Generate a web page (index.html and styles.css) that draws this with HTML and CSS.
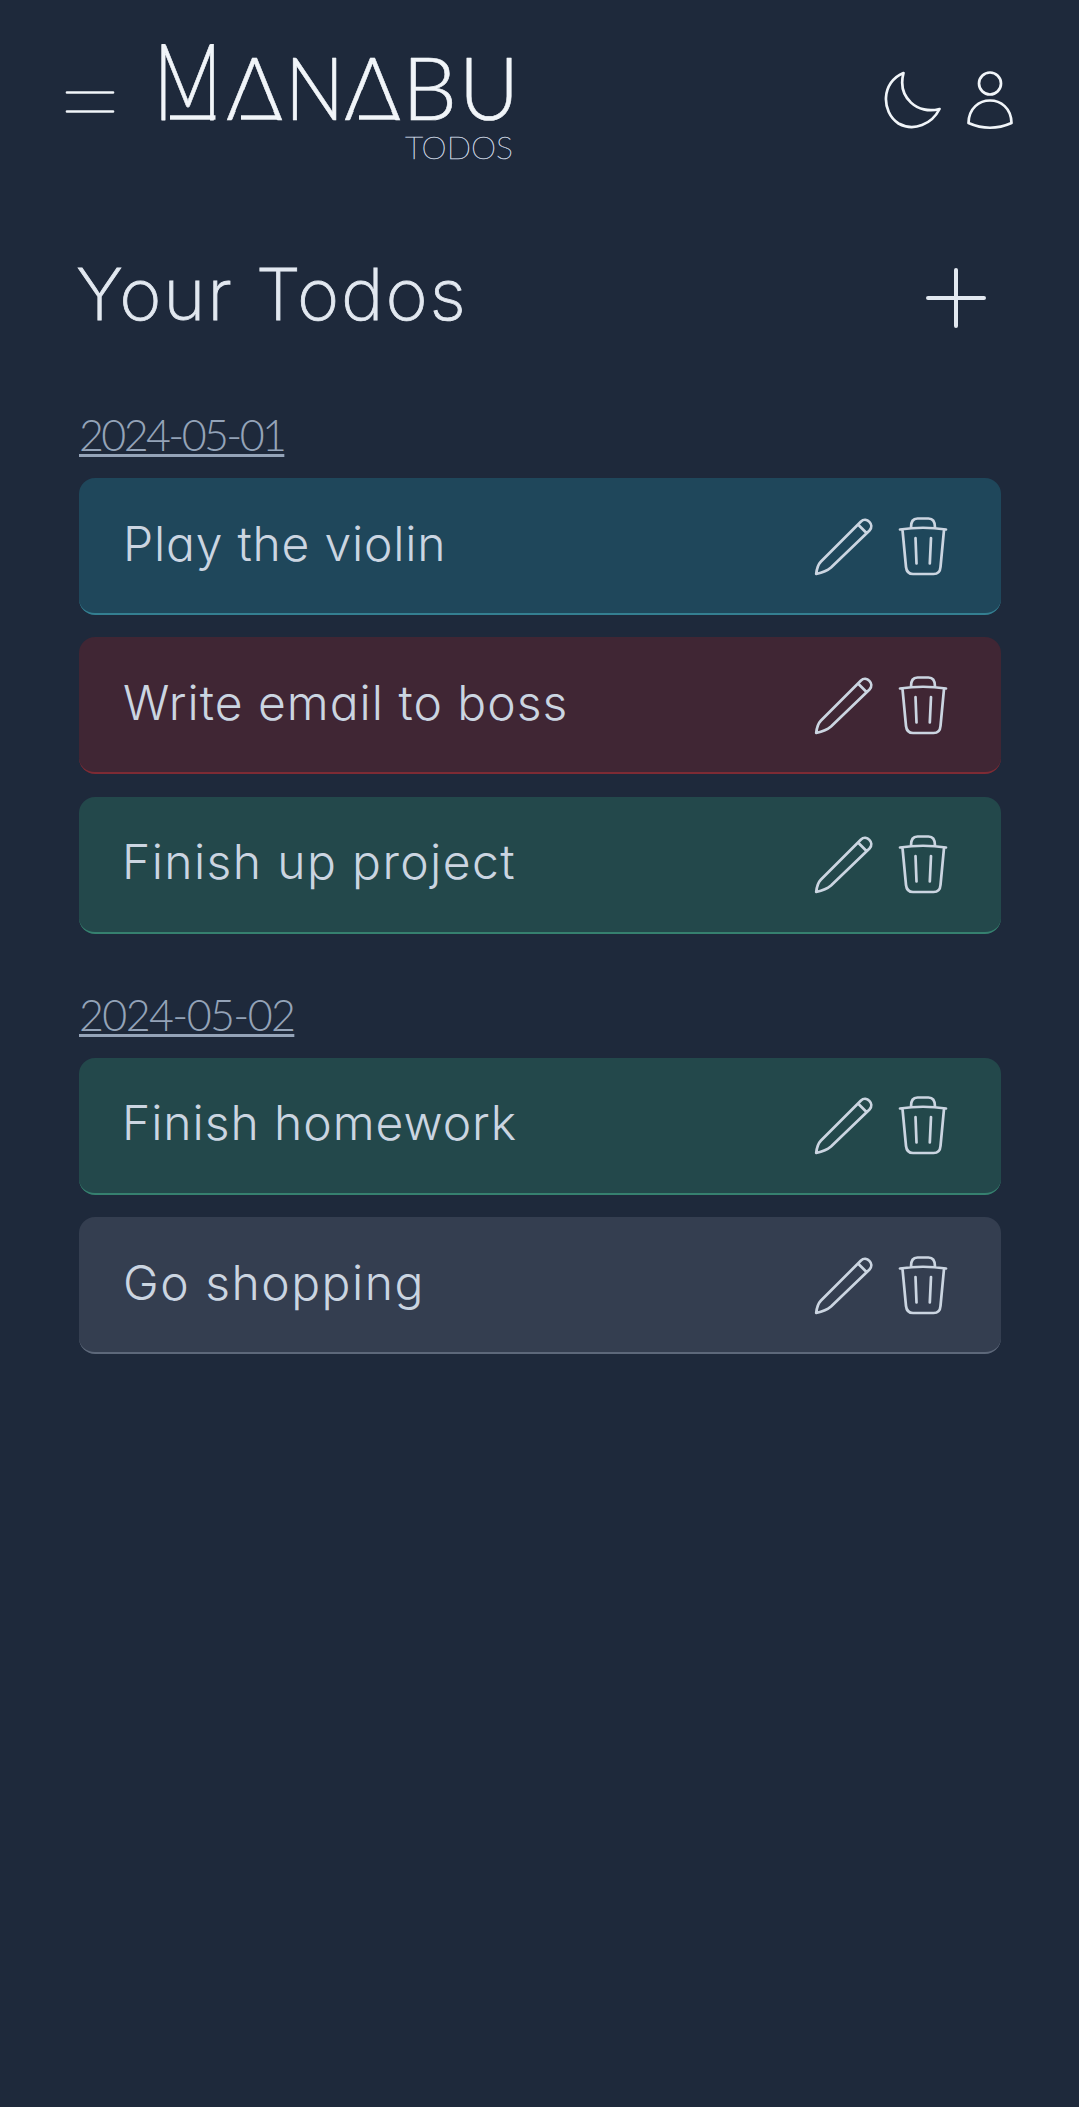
FILE: index.html
```html
<!DOCTYPE html>
<html lang="en">
<head>
<meta charset="utf-8">
<title>Manabu Todos</title>
<link rel="stylesheet" href="styles.css">
</head>
<body>
<svg class="sprite" aria-hidden="true">
  <symbol id="pencil" viewBox="0 0 60 60">
    <path d="M3.200 58 C3.800 52.500 5 48.500 8 45.500 L48 5.500 C53.500 .5 62 8.500 56.500 14.500 L18 51.500 C14 55 10 56.500 3.200 58Z M45 8.500 L53 16.500"/>
  </symbol>
  <symbol id="trash" viewBox="0 0 60 60">
    <path d="M7 13.500 Q30 10 53 13.500 M18 11.500 C18 5 20 2.500 24.500 2.500 H35.500 C40 2.500 42 5 42 11.500 M9.500 14 L13 51 Q13.800 58 20 58 H40.500 Q47 58 47.500 51 L51 14 M22.500 22 L23.500 47.500 M38 22 L36.800 47.500"/>
  </symbol>
</svg>
<header class="topbar">
  <button class="icon-button menu" aria-label="Menu">
    <svg width="50" height="24" viewBox="0 0 50 24"><path d="M2 2.500H48M2 21.500H48"/></svg>
  </button>
  <svg class="brand" width="360" height="134" viewBox="0 0 360 134">
    <g class="brand-name">
      <text class="initial" transform="translate(-5 86) scale(.7 1)">M</text>
      <text transform="translate(67 86)">A</text>
      <text transform="translate(126 86) scale(.9 1)">N</text>
      <text transform="translate(185 86)">A</text>
      <text transform="translate(243 86)">B</text>
      <text transform="translate(300 86) scale(.95 1)">U</text>
    </g>
    <g class="brand-cut">
      <path d="M85 56H105.500L114.500 77H76.500Z"/>
      <path d="M203 56H223.500L232.500 77H194.500Z"/>
    </g>
    <g class="brand-bar"><path d="M11 83.500H56.500M82 83.500H120M200 83.500H238"/></g>
    <text class="brand-sub" x="246" y="125" textLength="108">TODOS</text>
  </svg>
  <div class="tools">
    <button class="icon-button" aria-label="Dark mode">
      <svg width="58" height="60" viewBox="0 0 58 60"><path d="M19.500 3 C-3 12 -3 42 14.500 53.500 C30 62 48 54 55.500 39 C34 45 13 28 19.500 3Z"/></svg>
    </button>
    <button class="icon-button" aria-label="Account">
      <svg width="48" height="60" viewBox="0 0 48 60"><circle cx="24" cy="13.500" r="11"/><path d="M2.500 53 C3 23 45 23 45.500 53 Q24 62.500 2.500 53Z"/></svg>
    </button>
  </div>
</header>
<main class="content">
  <div class="heading">
    <h1>Your Todos</h1>
    <button class="icon-button add" aria-label="Add todo">
      <svg width="62" height="62" viewBox="0 0 62 62"><path d="M31 3V59M3 31H59"/></svg>
    </button>
  </div>
  <section class="day">
    <h2 class="date first">2024-05-01</h2>
    <ul>
      <li class="todo cyan"><span class="label play">Play the violin</span><svg class="icon"><use href="#pencil"/></svg><svg class="icon"><use href="#trash"/></svg></li>
      <li class="todo red"><span class="label write">Write email to boss</span><svg class="icon"><use href="#pencil"/></svg><svg class="icon"><use href="#trash"/></svg></li>
      <li class="todo green"><span class="label project">Finish up project</span><svg class="icon"><use href="#pencil"/></svg><svg class="icon"><use href="#trash"/></svg></li>
    </ul>
  </section>
  <section class="day">
    <h2 class="date second">2024-05-02</h2>
    <ul>
      <li class="todo green"><span class="label homework">Finish homework</span><svg class="icon"><use href="#pencil"/></svg><svg class="icon"><use href="#trash"/></svg></li>
      <li class="todo slate"><span class="label shopping">Go shopping</span><svg class="icon"><use href="#pencil"/></svg><svg class="icon"><use href="#trash"/></svg></li>
    </ul>
  </section>
</main>
</body>
</html>
```
FILE: styles.css
```css
* { box-sizing: border-box; margin: 0; padding: 0; }
body {
  min-height: 2107px;
  background: #1e293b;
  color: #e2e8f0;
  font-family: Inter, "Noto Sans", sans-serif;
  font-feature-settings: "cv11";
  font-weight: 300;
}
.sprite { display: none; }
svg { display: block; fill: none; stroke: currentColor; stroke-width: 2.7; stroke-linecap: round; stroke-linejoin: round; }
.icon-button { display: block; border: 0; background: none; color: inherit; }
.topbar { display: flex; align-items: flex-start; height: 200px; padding: 0 65px; color: #f1f5f9; }
.menu { padding-top: 90px; }
.brand { margin: 34px 0 0 44px; overflow: visible; font-family: Lato, sans-serif; }
.brand-name { fill: currentColor; stroke-width: .6; font-size: 87px; }
.brand-name .initial { font-size: 106px; stroke-width: .8; }
.brand-cut { fill: #1e293b; stroke: none; }
.brand-bar { stroke-width: 4.300; stroke-linecap: butt; }
.brand-sub { fill: #cbd5e1; stroke: #cbd5e1; stroke-width: .5; font-size: 32px; font-weight: 100; }
.tools { display: flex; gap: 24px; margin-left: auto; padding-top: 70px; }
.content { padding: 0 78px 0 79px; }
.heading { display: flex; justify-content: space-between; align-items: flex-start; height: 202px; padding: 50px 14px 0 0; }
h1 { margin-left: -3px; font-size: 72px; line-height: 88px; font-weight: 200; letter-spacing: 1.800px; -webkit-text-stroke: .8px; }
.add { padding-top: 17px; }
.add svg { stroke-width: 4; }
.day { margin-bottom: 48.200px; }
.date { width: max-content; height: 76px; padding-top: 7px; color: #94a3b8; font-family: Lato, sans-serif; font-size: 43px; line-height: 52px; font-weight: 300; text-decoration: underline; text-decoration-thickness: 3px; text-underline-offset: 3px; text-decoration-skip-ink: none; }
.first { letter-spacing: -2.600px; }
.second { letter-spacing: -1.600px; }
ul { display: grid; gap: 22.400px; list-style: none; }
.todo { display: flex; align-items: center; gap: 20px; height: 137px; padding: 0 48px 0 43px; border-bottom: 2px solid; border-radius: 16px; }
.label { flex: 1; padding-bottom: 4px; color: #cbd5e1; font-size: 48px; line-height: 58px; white-space: nowrap; }
.play { margin-left: 1px; letter-spacing: .8px; }
.write { margin-left: 1px; letter-spacing: 1px; }
.project { letter-spacing: 1.400px; }
.homework { letter-spacing: .95px; }
.shopping { margin-left: 1px; letter-spacing: 1.500px; }
.icon { width: 60px; height: 60px; color: #cbd5e1; }
.cyan { background: #1f475b; border-color: #347f91; }
.red { background: #402634; border-color: #7e2b34; }
.green { background: #23484b; border-color: #36806f; }
.slate { background: #343e50; border-color: #5d687a; }
```
